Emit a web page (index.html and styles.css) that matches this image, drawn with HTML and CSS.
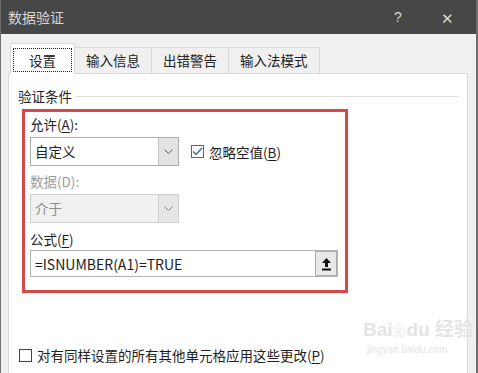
FILE: index.html
```html
<!DOCTYPE html>
<html lang="zh-CN">
<head>
  <meta charset="UTF-8">
  <title>数据验证</title>
  <link rel="stylesheet" href="styles.css">
</head>
<body>
  <div class="window">
    <div class="titlebar">
      <span class="title">数据验证</span>
      <span class="help">?</span>
      <span class="close">✕</span>
    </div>

    <div class="content">
      <div class="tabs">
        <div class="tab active"><span class="focus">设置</span></div>
        <div class="tab">输入信息</div>
        <div class="tab">出错警告</div>
        <div class="tab">输入法模式</div>
      </div>

      <div class="panel">
        <div class="group-title">验证条件</div>

        <div class="highlight">
          <div class="label">允许(<u>A</u>):</div>
          <div class="row">
            <div class="select">
              <span class="value">自定义</span>
              <span class="arrow">
                <svg width="9" height="6" viewBox="0 0 9 6"><path d="M0.5 0.5 L4.5 4.5 L8.5 0.5" fill="none" stroke="#555" stroke-width="1"/></svg>
              </span>
            </div>
            <label class="check">
              <span class="box checked">
                <svg width="11" height="9" viewBox="0 0 11 9"><path d="M1 4.5 L4 7.5 L10 1" fill="none" stroke="#2b6ea8" stroke-width="1.4"/></svg>
              </span>
              <span>忽略空值(<u>B</u>)</span>
            </label>
          </div>

          <div class="label disabled">数据(D):</div>
          <div class="select off">
            <span class="value">介于</span>
            <span class="arrow">
              <svg width="9" height="6" viewBox="0 0 9 6"><path d="M0.5 0.5 L4.5 4.5 L8.5 0.5" fill="none" stroke="#888" stroke-width="1"/></svg>
            </span>
          </div>

          <div class="label formula-label">公式(<u>F</u>)</div>
          <div class="formula">
            <span class="formula-text">=ISNUMBER(A1)=TRUE</span>
            <span class="collapse">
              <svg width="11" height="14" viewBox="0 0 11 14"><path d="M5.5 1 L10 6 L7 6 L7 10 L4 10 L4 6 L1 6 Z" fill="#111"/><rect x="1" y="11.5" width="9" height="2" fill="#111"/></svg>
            </span>
          </div>
        </div>

        <label class="check apply">
          <span class="box"></span>
          <span>对有同样设置的所有其他单元格应用这些更改(<u>P</u>)</span>
        </label>
      </div>
    </div>

    <div class="watermark">
      <div class="wm-logo">Bai<span class="paw">❀</span>du 经验</div>
      <div class="wm-url">jingyan.baidu.com</div>
    </div>
  </div>
</body>
</html>
```

FILE: styles.css
```css
body {
  margin: 0;
  font-family: "Noto Sans CJK SC", "Liberation Sans", sans-serif;
  font-size: 13.5px;
  color: #1e1e1e;
  background: #f0f0f0;
}
u {
  text-decoration: underline;
  text-underline-offset: 2px;
}
.window {
  position: relative;
  width: 478px;
  height: 373px;
  box-sizing: border-box;
  border-left: 1px solid #6e6e6e;
  border-right: 2px solid #6e6e6e;
  background: #f0f0f0;
  overflow: hidden;
}
.titlebar {
  height: 34px;
  background: #474747;
  color: #d8d8d8;
  display: flex;
  align-items: center;
  padding-left: 7px;
  font-size: 14px;
}
.title {
  flex: 1;
}
.help {
  width: 20px;
  text-align: center;
  margin-right: 29px;
  font-family: "Liberation Sans", sans-serif;
  font-size: 14px;
}
.close {
  width: 20px;
  text-align: center;
  margin-right: 19px;
  font-size: 15px;
}
.content {
  padding: 9px 8px 0 7px;
}
.tabs {
  display: flex;
  align-items: flex-end;
  padding-left: 2px;
  height: 30px;
  position: relative;
  z-index: 1;
}
.tab {
  height: 25px;
  line-height: 24px;
  padding: 0 11px;
  border: 1px solid #d9d9d9;
  border-bottom: none;
  border-left: none;
  background: #f0f0f0;
  color: #222;
}
.tab.active {
  height: 30px;
  background: #fff;
  border-left: 1px solid #d9d9d9;
  padding: 0 2px;
  margin-bottom: -1px;
  display: flex;
  align-items: center;
}
.focus {
  display: block;
  border: 1px dotted #222;
  padding: 0 15px;
  height: 22px;
  line-height: 22px;
  margin-top: 2px;
}
.panel {
  background: #fff;
  border: 1px solid #d9d9d9;
  height: 320px;
  padding: 13px 0 0 9px;
  box-sizing: border-box;
}
.group-title {
  display: flex;
  align-items: center;
  line-height: 18px;
}
.group-title::after {
  content: "";
  flex: 1;
  border-top: 1px solid #dedede;
  margin: 0 8px 0 4px;
}
.highlight {
  width: 326px;
  box-sizing: border-box;
  margin: 4px 0 0 4px;
  border: 3px solid #d6484a;
  padding: 3px 0 13px 5px;
}
.label {
  line-height: 18px;
  margin-bottom: 4px;
}
.label.disabled {
  color: #9b9b9b;
  margin-top: 6px;
}
.formula-label {
  margin-top: 7px;
  margin-bottom: 2px;
}
.row {
  display: flex;
  align-items: center;
  gap: 12px;
}
.select {
  width: 149px;
  height: 29px;
  box-sizing: border-box;
  border: 1px solid #adadad;
  background: #fff;
  display: flex;
}
.value {
  flex: 1;
  line-height: 27px;
  padding-left: 4px;
}
.arrow {
  width: 19px;
  border-left: 1px solid #c4c4c4;
  background: #e3e3e3;
  display: flex;
  align-items: center;
  justify-content: center;
}
.select.off {
  background: #f1f1f1;
  border-color: #cfcfcf;
  color: #8d8d8d;
}
.select.off .arrow {
  background: #e6e6e6;
  border-left-color: #cfcfcf;
}
.check {
  display: flex;
  align-items: center;
  gap: 5px;
}
.box {
  width: 13px;
  height: 13px;
  box-sizing: border-box;
  border: 1px solid #444;
  background: #fff;
  display: flex;
  align-items: center;
  justify-content: center;
}
.box.checked {
  border-color: #2b6ea8;
}
.formula {
  width: 308px;
  height: 27px;
  box-sizing: border-box;
  border: 1px solid #b4b4b4;
  display: flex;
  align-items: center;
}
.formula-text {
  flex: 1;
  padding-left: 4px;
  font-size: 14px;
}
.collapse {
  width: 22px;
  height: 25px;
  box-sizing: border-box;
  border: 1px solid #adadad;
  background: #e8e8e8;
  display: flex;
  align-items: center;
  justify-content: center;
}
.apply {
  margin: 52px 0 0 1px;
}
.watermark {
  position: absolute;
  left: 362px;
  top: 318px;
  color: #e4e4e4;
  white-space: nowrap;
  font-family: "Liberation Sans", "Noto Sans CJK SC", sans-serif;
}
.wm-logo {
  font-size: 19px;
  font-weight: bold;
  line-height: 24px;
}
.paw {
  font-size: 14px;
}
.wm-url {
  font-size: 10px;
  line-height: 14px;
  padding-left: 4px;
}
```
